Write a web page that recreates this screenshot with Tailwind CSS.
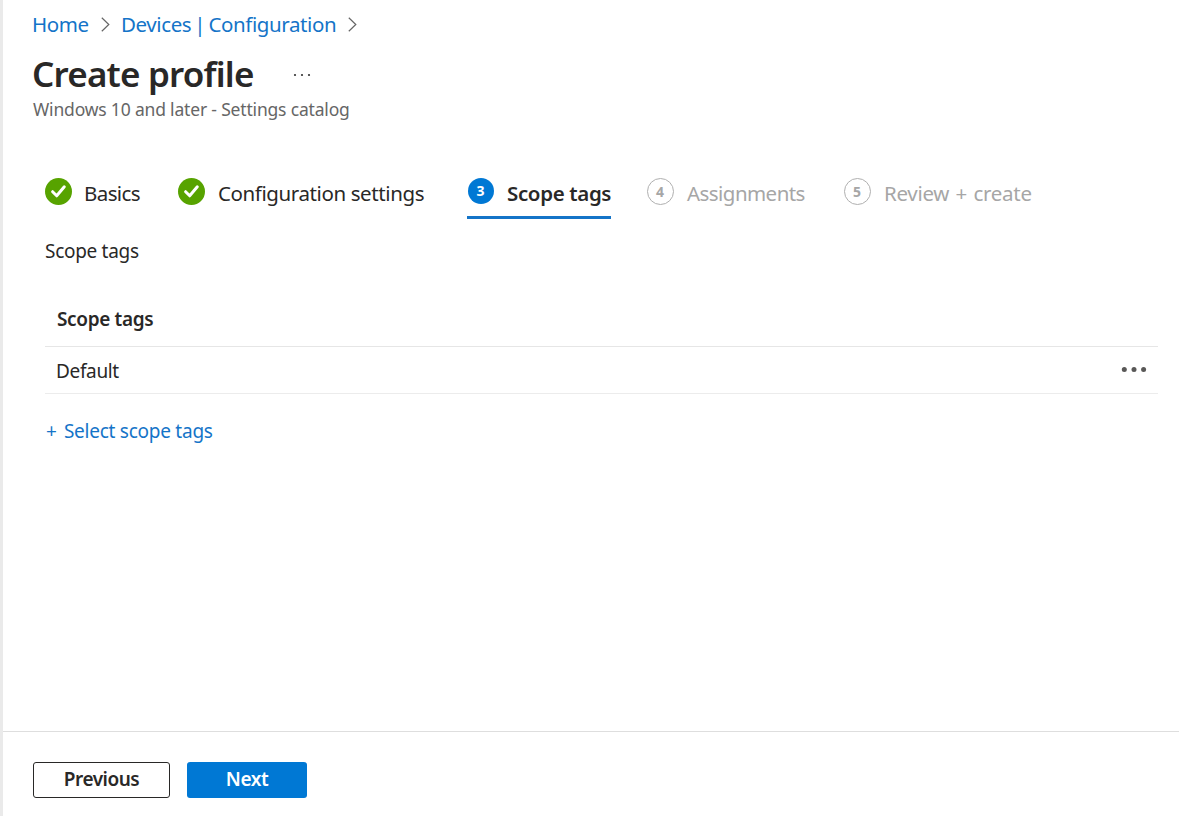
<!DOCTYPE html>
<html lang="en">
<head>
    <meta charset="UTF-8">
    <meta name="viewport" content="width=device-width, initial-scale=1.0">
    <title>Create profile</title>
    <script src="https://cdn.jsdelivr.net/npm/@tailwindcss/browser@4"></script>
</head>
<body class="bg-white font-['Noto_Sans',sans-serif] text-[#292827]">
    <div class="flex h-screen flex-col overflow-hidden border-l-3 border-[#eaeaea]">
        <!-- Breadcrumb -->
        <nav class="flex h-12 shrink-0 items-center pl-[29px] text-[20.5px] whitespace-nowrap text-[#1474c8]">
            <a href="#" class="w-[58px] tracking-[-0.4px]">Home</a>
            <svg class="ml-[11px] h-4 w-[9px]" viewBox="0 0 9 16" fill="none" stroke="#666" stroke-width="1.2"><path d="M.8 1.7L7.8 8.5l-7 6.8"/></svg>
            <a href="#" class="ml-[11px] w-[216px] tracking-[-0.4px] [word-spacing:-1.8px]">Devices | Configuration</a>
            <svg class="ml-[11px] h-4 w-[9px]" viewBox="0 0 9 16" fill="none" stroke="#666" stroke-width="1.2"><path d="M.8 1.7L7.8 8.5l-7 6.8"/></svg>
        </nav>

        <!-- Title -->
        <header class="shrink-0 pl-[30px]">
            <div class="-ml-px flex h-[49px] items-center pt-[3px]">
                <h1 class="w-[221px] text-[35px] font-semibold tracking-[-0.8px] whitespace-nowrap">Create profile</h1>
                <svg class="mt-px ml-10 h-1 w-[18px]" viewBox="0 0 18 4" fill="#333"><circle cx="2" cy="2" r="1.1"/><circle cx="9" cy="2" r="1.1"/><circle cx="16" cy="2" r="1.1"/></svg>
            </div>
            <p class="text-[17.5px] leading-6 tracking-[-0.18px] text-[#666]">Windows 10 and later - Settings catalog</p>
        </header>

        <main class="grow pt-[54px] pr-[21px] pl-[42px] text-[19px] leading-7">
            <!-- Steps -->
            <ol class="flex h-[44px] text-[20.5px] leading-[30px] whitespace-nowrap">
                <li class="flex w-[133px] items-start gap-[12px] pt-[3px]">
                    <svg class="size-[27px] shrink-0" viewBox="0 0 27 27"><circle cx="13.5" cy="13.5" r="13.5" fill="#57a300"/><path d="M7.6 13.7l4.1 4.1 7.6-9" fill="none" stroke="#fff" stroke-width="3" stroke-linecap="round" stroke-linejoin="round"/></svg>
                    <span class="tracking-[-0.6px]">Basics</span>
                </li>
                <li class="flex w-[289px] items-start gap-[13px] pt-[3px]">
                    <svg class="size-[27px] shrink-0" viewBox="0 0 27 27"><circle cx="13.5" cy="13.5" r="13.5" fill="#57a300"/><path d="M7.6 13.7l4.1 4.1 7.6-9" fill="none" stroke="#fff" stroke-width="3" stroke-linecap="round" stroke-linejoin="round"/></svg>
                    <span class="tracking-[-0.4px]">Configuration settings</span>
                </li>
                <li class="flex w-[144px] items-start gap-[13px] border-b-3 border-[#1474c8] pt-[3px] pl-px">
                    <span class="flex size-[26px] shrink-0 items-center justify-center rounded-full bg-[#0078d4] pr-px text-[14px] font-bold text-white">3</span>
                    <span class="font-semibold tracking-[-0.35px]">Scope tags</span>
                </li>
                <li class="ml-9 flex w-[197px] items-start gap-[13px] pt-[3px] text-[#a6a6a6]">
                    <span class="flex size-[27px] shrink-0 items-center justify-center rounded-full border-[1.5px] border-[#b0b0b0] pr-px text-[14px] font-bold">4</span>
                    <span class="tracking-[-0.55px]">Assignments</span>
                </li>
                <li class="flex items-start gap-[13px] pt-[3px] text-[#a6a6a6]">
                    <span class="flex size-[27px] shrink-0 items-center justify-center rounded-full border-[1.5px] border-[#b0b0b0] pr-px text-[14px] font-bold">5</span>
                    <span class="tracking-[-0.3px] [word-spacing:1.5px]">Review + create</span>
                </li>
            </ol>

            <p class="mt-[18px] tracking-[-0.3px]">Scope tags</p>

            <!-- Scope tags table -->
            <div class="mt-[26px]">
                <div class="flex h-[56px] items-center border-b border-[#e6e6e6] pl-[12px] font-semibold tracking-[-0.35px]">Scope tags</div>
                <div class="flex h-[47px] items-center justify-between border-b border-[#ececec] pr-[11px] pl-[11px]">
                    <span class="pt-px tracking-[-0.35px]">Default</span>
                    <svg class="h-[6px] w-[26px]" viewBox="0 0 26 6" fill="#595857"><circle cx="3.3" cy="2.5" r="2.5"/><circle cx="13" cy="2.5" r="2.5"/><circle cx="22.6" cy="2.5" r="2.5"/></svg>
                </div>
            </div>
            <a href="#" class="mt-[23px] flex gap-[7px] pl-px text-[#1474c8]"><span>+</span><span class="tracking-[-0.25px]">Select scope tags</span></a>
        </main>

        <!-- Footer -->
        <footer class="flex h-[85px] shrink-0 gap-[17px] border-t border-[#dedede] pt-[30px] pl-[30px] text-[19px] font-semibold">
            <button class="h-9 w-[137px] rounded-[3px] border border-[#292827] pb-[3px] leading-7 tracking-[-0.5px]">Previous</button>
            <button class="h-9 w-[120px] rounded-[3px] bg-[#0078d4] pb-[3px] leading-7 tracking-[-0.4px] text-white">Next</button>
        </footer>
    </div>
</body>
</html>
